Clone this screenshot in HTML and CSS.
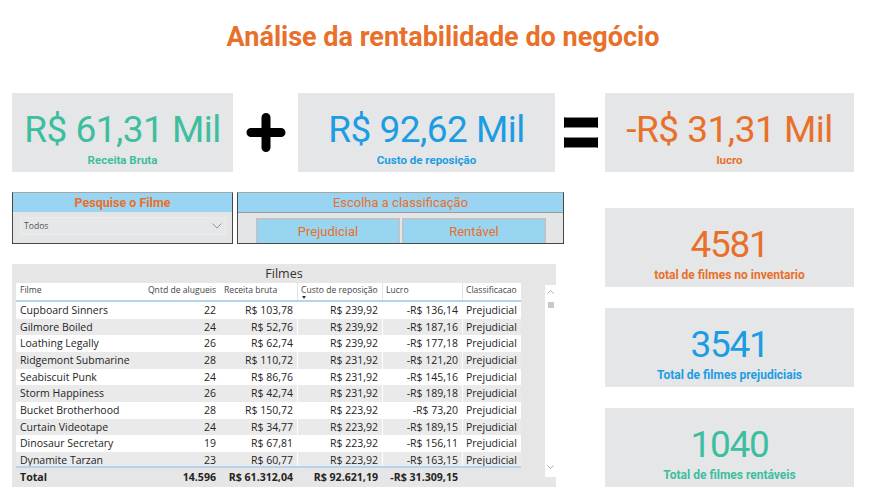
FILE: index.html
```html
<!DOCTYPE html>
<html lang="pt">
<head>
<meta charset="utf-8">
<title>Análise da rentabilidade do negócio</title>
<link rel="stylesheet" href="styles.css">
</head>
<body>
<div class="page">
  <h1 class="title">Análise da rentabilidade do negócio</h1>

  <div class="kpi-row">
    <div class="card w1 teal">
      <div class="num">R$ 61,31 Mil</div>
      <div class="lbl">Receita Bruta</div>
    </div>
    <div class="op plus">
      <svg width="40" height="39" viewBox="0 0 40 39"><path d="M5 19.5H35M20 4.5V34.5" stroke="#000" stroke-width="9" stroke-linecap="round" fill="none"/></svg>
    </div>
    <div class="card w2 blue">
      <div class="num">R$ 92,62 Mil</div>
      <div class="lbl">Custo de reposição</div>
    </div>
    <div class="op eq">
      <span class="bar"></span>
      <span class="bar"></span>
    </div>
    <div class="card w3 orange">
      <div class="num">-R$ 31,31 Mil</div>
      <div class="lbl">lucro</div>
    </div>
  </div>

  <div class="main">
    <div class="left">
      <div class="slicers">
        <div class="slicer s1">
          <div class="s-head">Pesquise o Filme</div>
          <div class="s-body">
            <div class="dropdown">
              <span>Todos</span>
              <svg width="10" height="6" viewBox="0 0 10 6"><path d="M0.5 0.5L5 5L9.5 0.5" stroke="#8a8a8a" stroke-width="0.9" fill="none"/></svg>
            </div>
          </div>
        </div>
        <div class="slicer s2">
          <div class="s-head">Escolha a classificação</div>
          <div class="s-body">
            <div class="btn">Prejudicial</div>
            <div class="btn">Rentável</div>
          </div>
        </div>
      </div>

      <div class="panel">
        <div class="panel-title">Filmes</div>
        <div class="panel-body">
          <div class="tbl">
            <div class="tr th">
              <div class="td">Filme</div>
              <div class="td r">Qntd de alugueis</div>
              <div class="td">Receita bruta</div>
              <div class="td sep">Custo de reposição<span class="sort"></span></div>
              <div class="td sep">Lucro</div>
              <div class="td sep">Classificacao</div>
            </div>
            <div class="rows">
              <div class="tr"><div class="td">Cupboard Sinners</div><div class="td r">22</div><div class="td r">R$ 103,78</div><div class="td r sep">R$ 239,92</div><div class="td r sep">-R$ 136,14</div><div class="td sep">Prejudicial</div></div>
              <div class="tr"><div class="td">Gilmore Boiled</div><div class="td r">24</div><div class="td r">R$ 52,76</div><div class="td r sep">R$ 239,92</div><div class="td r sep">-R$ 187,16</div><div class="td sep">Prejudicial</div></div>
              <div class="tr"><div class="td">Loathing Legally</div><div class="td r">26</div><div class="td r">R$ 62,74</div><div class="td r sep">R$ 239,92</div><div class="td r sep">-R$ 177,18</div><div class="td sep">Prejudicial</div></div>
              <div class="tr"><div class="td">Ridgemont Submarine</div><div class="td r">28</div><div class="td r">R$ 110,72</div><div class="td r sep">R$ 231,92</div><div class="td r sep">-R$ 121,20</div><div class="td sep">Prejudicial</div></div>
              <div class="tr"><div class="td">Seabiscuit Punk</div><div class="td r">24</div><div class="td r">R$ 86,76</div><div class="td r sep">R$ 231,92</div><div class="td r sep">-R$ 145,16</div><div class="td sep">Prejudicial</div></div>
              <div class="tr"><div class="td">Storm Happiness</div><div class="td r">26</div><div class="td r">R$ 42,74</div><div class="td r sep">R$ 231,92</div><div class="td r sep">-R$ 189,18</div><div class="td sep">Prejudicial</div></div>
              <div class="tr"><div class="td">Bucket Brotherhood</div><div class="td r">28</div><div class="td r">R$ 150,72</div><div class="td r sep">R$ 223,92</div><div class="td r sep">-R$ 73,20</div><div class="td sep">Prejudicial</div></div>
              <div class="tr"><div class="td">Curtain Videotape</div><div class="td r">24</div><div class="td r">R$ 34,77</div><div class="td r sep">R$ 223,92</div><div class="td r sep">-R$ 189,15</div><div class="td sep">Prejudicial</div></div>
              <div class="tr"><div class="td">Dinosaur Secretary</div><div class="td r">19</div><div class="td r">R$ 67,81</div><div class="td r sep">R$ 223,92</div><div class="td r sep">-R$ 156,11</div><div class="td sep">Prejudicial</div></div>
              <div class="tr"><div class="td">Dynamite Tarzan</div><div class="td r">23</div><div class="td r">R$ 60,77</div><div class="td r sep">R$ 223,92</div><div class="td r sep">-R$ 163,15</div><div class="td sep">Prejudicial</div></div>
            </div>
            <div class="tr total">
              <div class="td">Total</div>
              <div class="td r">14.596</div>
              <div class="td r wide">R$ 61.312,04</div>
              <div class="td r wide">R$ 92.621,19</div>
              <div class="td r wide">-R$ 31.309,15</div>
              <div class="td"></div>
            </div>
          </div>
          <div class="scroll">
            <svg width="7" height="4" viewBox="0 0 7 4"><path d="M0.5 3.5L3.5 0.5L6.5 3.5" stroke="#9a9a9a" stroke-width="0.8" fill="none"/></svg>
            <span class="thumb"></span>
            <svg class="down" width="7" height="4" viewBox="0 0 7 4"><path d="M0.5 0.5L3.5 3.5L6.5 0.5" stroke="#9a9a9a" stroke-width="0.8" fill="none"/></svg>
          </div>
        </div>
      </div>
    </div>

    <div class="right">
      <div class="card orange">
        <div class="num big">4581</div>
        <div class="lbl sm">total de filmes no inventario</div>
      </div>
      <div class="card blue">
        <div class="num big">3541</div>
        <div class="lbl sm">Total de filmes prejudiciais</div>
      </div>
      <div class="card teal">
        <div class="num big">1040</div>
        <div class="lbl sm">Total de filmes rentáveis</div>
      </div>
    </div>
  </div>
</div>
</body>
</html>
```

FILE: styles.css
```css
body {
  margin: 0;
  background: #ffffff;
}

.page {
  width: 875px;
  height: 490px;
  overflow: hidden;
  font-family: Roboto, "Liberation Sans", sans-serif;
}

.title {
  margin: 0;
  height: 74px;
  line-height: 74px;
  padding-left: 11px;
  text-align: center;
  font-size: 27px;
  font-weight: 700;
  color: #e8702a;
}

.teal { color: #3dbe9f; }
.blue { color: #1c9de3; }
.orange { color: #e8702a; }

/* KPI row */
.kpi-row {
  display: flex;
  height: 79px;
  margin-top: 19px;
  padding-left: 12px;
}

.card {
  box-sizing: border-box;
  height: 79px;
  background: #e5e6e8;
  display: flex;
  flex-direction: column;
  align-items: center;
  padding-top: 17px;
}

.w1 { width: 221px; }
.w2 { width: 257px; }
.w3 { width: 249px; }

.num {
  font-size: 37px;
  font-weight: 400;
  line-height: 40px;
  letter-spacing: -0.5px;
  white-space: nowrap;
}

.num.big {
  font-size: 37px;
  letter-spacing: -1.3px;
}

.lbl {
  font-size: 11.5px;
  font-weight: 700;
  line-height: 14px;
  margin-top: 3px;
  white-space: nowrap;
}

.lbl.sm {
  font-size: 12px;
}

.op {
  display: flex;
  align-items: center;
  justify-content: center;
}

.op.plus { width: 65px; }

.op.eq {
  width: 50px;
  flex-direction: column;
  gap: 9px;
  padding-left: 2px;
  box-sizing: border-box;
}

.bar {
  display: block;
  width: 34px;
  height: 11px;
  box-sizing: border-box;
  background: #000;
  border: 1px solid #8a8a8a;
  border-left-color: #000;
  border-right-color: #000;
}

/* main section */
.main {
  display: flex;
  gap: 40px;
  margin-top: 20px;
  padding-left: 12px;
}

.left { width: 553px; }

.slicers {
  display: flex;
  gap: 4px;
  height: 52px;
}

.slicer {
  box-sizing: border-box;
  height: 52px;
  display: flex;
  flex-direction: column;
  background: #e4e5e6;
  border: 1px solid #474747;
  border-top-color: #a6a6a6;
}

.s1 { width: 221px; }
.s2 { width: 327px; }

.s-head {
  height: 19px;
  line-height: 19px;
  background: #99d5f2;
  color: #e8702a;
  text-align: center;
  font-size: 13px;
  white-space: nowrap;
}

.s1 .s-head {
  font-weight: 700;
  font-size: 12.5px;
}

.s2 .s-head {
  border-bottom: 1px solid #9c9c9c;
}

.s-body { flex: 1; }

.s1 .s-body {
  padding: 5px 6px 0 7px;
}

.dropdown {
  height: 18px;
  box-sizing: border-box;
  border: 1px solid #ececec;
  background: #e6e7e8;
  display: flex;
  align-items: center;
  justify-content: space-between;
  padding: 0 3px 0 3px;
  font-family: "Open Sans", sans-serif;
  font-size: 8.6px;
  color: #555;
}

.s2 .s-body {
  display: flex;
  gap: 2px;
  padding: 5px 0 0 18px;
}

.btn {
  width: 144px;
  box-sizing: border-box;
  border: 2px solid #b6c6ce;
  border-bottom: none;
  background: #98d5f1;
  color: #e8702a;
  font-size: 13px;
  display: flex;
  align-items: center;
  justify-content: center;
}

/* table panel */
.panel {
  margin-top: 20px;
  width: 544px;
  height: 223px;
  background: #e6e6e6;
  display: flex;
  flex-direction: column;
}

.panel-title {
  height: 19px;
  line-height: 20px;
  text-align: center;
  font-family: "Open Sans", sans-serif;
  font-size: 12.5px;
  color: #333;
}

.panel-body {
  flex: 1;
  display: flex;
  padding-left: 4px;
}

.tbl {
  width: 505px;
  display: flex;
  flex-direction: column;
  font-family: "Open Sans", sans-serif;
  color: #252423;
}

.tr {
  display: grid;
  grid-template-columns: 124px 80px 77px 85px 80px 59px;
}

.td {
  box-sizing: border-box;
  padding: 0 4px;
  white-space: nowrap;
  overflow: hidden;
}

.r { text-align: right; }

.th {
  height: 17px;
  background: #fff;
  border-bottom: 2px solid #b3d3ef;
  font-size: 8.6px;
  color: #444;
}

.th .td {
  padding-top: 2px;
  line-height: 11px;
  overflow: visible;
}

.th .sep { border-left: 1px solid #e4e4e4; padding-left: 3px; }

.sort {
  display: block;
  width: 0;
  height: 0;
  margin-left: 1px;
  border-left: 2.5px solid transparent;
  border-right: 2.5px solid transparent;
  border-top: 3px solid #333;
}

.rows {
  height: 164px;
  overflow: hidden;
}

.rows .tr {
  height: 16.67px;
  line-height: 16.67px;
  font-size: 10.5px;
  background: #fff;
}

.rows .tr:nth-child(even) { background: #eaeaea; }

.rows .sep { border-left: 1px solid #fff; }
.rows .td.sep:last-child { padding-left: 3px; }

.total {
  height: 19px;
  line-height: 18px;
  border-top: 2px solid #b3d3ef;
  font-weight: 700;
  font-size: 10.6px;
}

.total .wide { overflow: visible; }

.scroll {
  width: 11px;
  height: 192px;
  margin-left: auto;
  margin-top: 2px;
  background: #fff;
  display: flex;
  flex-direction: column;
  align-items: center;
  padding-top: 5px;
  box-sizing: border-box;
}

.thumb {
  display: block;
  width: 6px;
  height: 6px;
  margin-top: 8px;
  background: #c8c8c8;
}

.scroll .down {
  margin-top: auto;
  margin-bottom: 8px;
}

/* right column */
.right {
  width: 249px;
  margin-top: 16px;
  display: flex;
  flex-direction: column;
  gap: 21px;
}
```
